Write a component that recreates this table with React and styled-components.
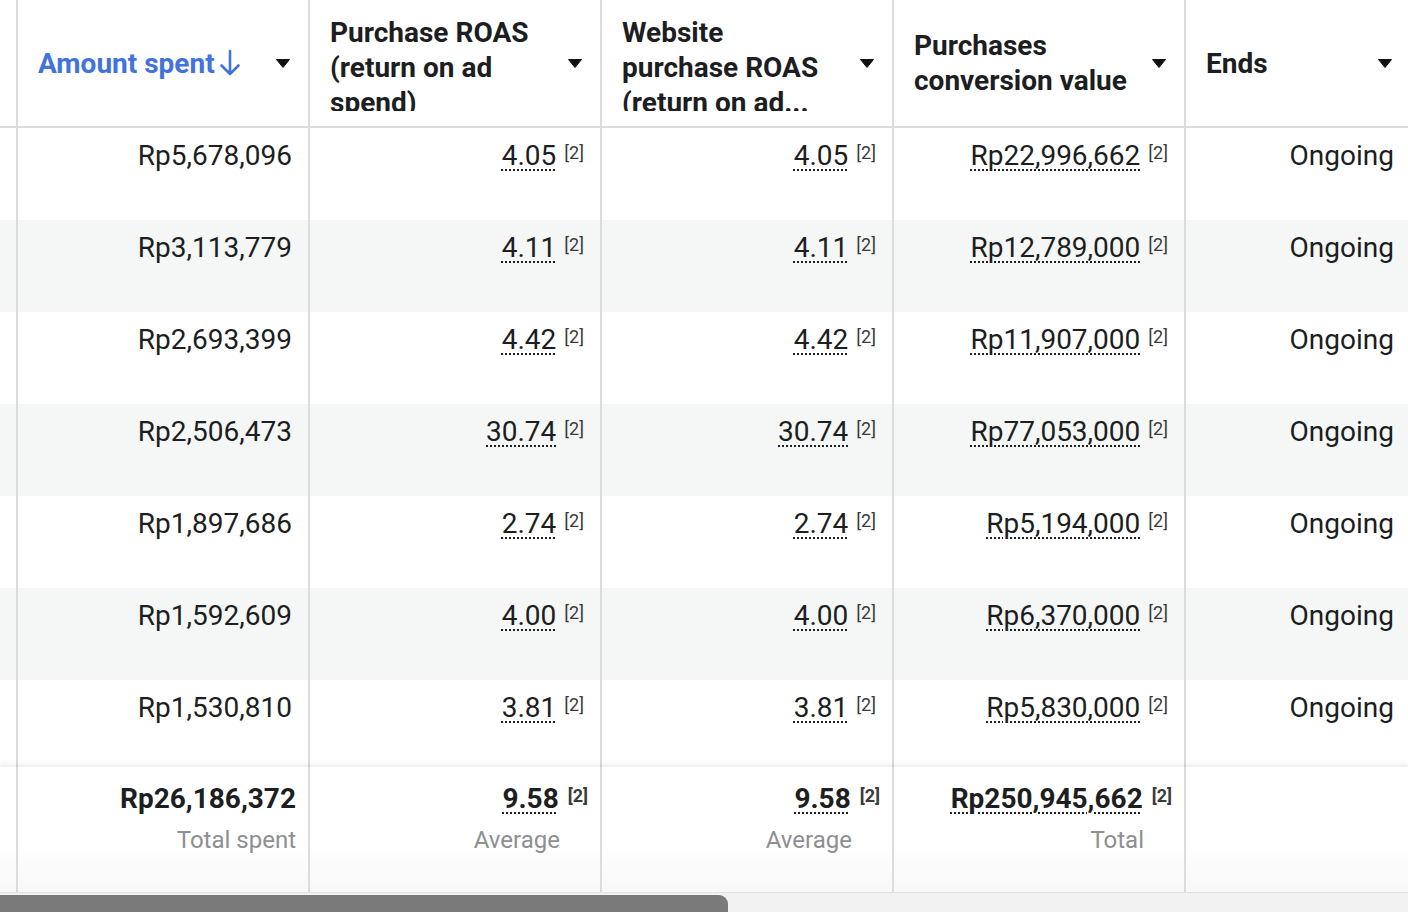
import React from 'react'
import styled, { createGlobalStyle } from 'styled-components'

const GlobalStyle = createGlobalStyle`
  html, body {
    margin: 0;
    padding: 0;
    background: #fff;
    overflow: hidden;
  }
  body {
    font-family: Roboto, "Liberation Sans", Arial, sans-serif;
    color: #1c1e21;
  }
`

const NoWrap = styled.span`
  white-space: nowrap;
`

const cols = '18px 292px 292px 292px 292px 224px'

const rows = [
  ['Rp5,678,096', '4.05', '4.05', 'Rp22,996,662'],
  ['Rp3,113,779', '4.11', '4.11', 'Rp12,789,000'],
  ['Rp2,693,399', '4.42', '4.42', 'Rp11,907,000'],
  ['Rp2,506,473', '30.74', '30.74', 'Rp77,053,000'],
  ['Rp1,897,686', '2.74', '2.74', 'Rp5,194,000'],
  ['Rp1,592,609', '4.00', '4.00', 'Rp6,370,000'],
  ['Rp1,530,810', '3.81', '3.81', 'Rp5,830,000'],
]

const headers = [
  { key: 'spent', label: 'Amount spent', active: true },
  { key: 'roas', label: 'Purchase ROAS (return on ad spend)' },
  { key: 'web', label: <>Website purchase ROAS (return on <NoWrap>ad...</NoWrap></> },
  { key: 'value', label: 'Purchases conversion value' },
  { key: 'ends', label: 'Ends' },
]

export default function App() {
  return (
    <Page>
      <GlobalStyle />
      <HeaderRow>
        <StubCell />
        {headers.map(h => (
          <HeaderCell key={h.key}>
            <HeaderText $active={h.active}>
              {h.label}
              {h.active && <SortArrow />}
            </HeaderText>
            <Caret />
          </HeaderCell>
        ))}
      </HeaderRow>

      <Body>
        {rows.map((r, i) => (
          <DataRow key={i} $striped={i % 2 === 1}>
            <StubCell />
            <DataCell>{r[0]}</DataCell>
            <DataCell><Metric value={r[1]} /></DataCell>
            <DataCell><Metric value={r[2]} /></DataCell>
            <DataCell><Metric value={r[3]} /></DataCell>
            <DataCell>Ongoing</DataCell>
          </DataRow>
        ))}
      </Body>

      <FooterRow>
        <StubCell />
        <FooterCell>
          <FooterValue>Rp26,186,372</FooterValue>
          <FooterLabel>Total spent</FooterLabel>
        </FooterCell>
        <FooterCell>
          <FooterValue><Dotted>9.58</Dotted><Sup $bold>[2]</Sup></FooterValue>
          <FooterLabel $shift>Average</FooterLabel>
        </FooterCell>
        <FooterCell>
          <FooterValue><Dotted>9.58</Dotted><Sup $bold>[2]</Sup></FooterValue>
          <FooterLabel $shift>Average</FooterLabel>
        </FooterCell>
        <FooterCell>
          <FooterValue><Dotted>Rp250,945,662</Dotted><Sup $bold>[2]</Sup></FooterValue>
          <FooterLabel $shift>Total</FooterLabel>
        </FooterCell>
        <FooterCell />
      </FooterRow>

      <ScrollTrack>
        <ScrollThumb />
      </ScrollTrack>
    </Page>
  )
}

const Metric = ({ value }) => (
  <>
    <Dotted>{value}</Dotted>
    <Sup>[2]</Sup>
  </>
)

const SortArrow = () => (
  <ArrowSvg viewBox="0 0 22 28" width="22" height="28">
    <path d="M11 2v23M2.5 16.5L11 25l8.5-8.5" fill="none" stroke="currentColor" strokeWidth="2.6" strokeLinecap="round" strokeLinejoin="round" />
  </ArrowSvg>
)

const Caret = () => (
  <CaretSvg viewBox="0 0 14 9" width="14" height="9">
    <path d="M0.5 0.5h13L7 8.5z" fill="#111" stroke="#111" strokeLinejoin="round" />
  </CaretSvg>
)

const Page = styled.div`
  width: 1409px;
  height: 912px;
  display: flex;
  flex-direction: column;
  overflow: hidden;
`

const HeaderRow = styled.div`
  display: grid;
  grid-template-columns: ${cols};
  height: 128px;
  border-bottom: 2px solid #dadce0;
  box-sizing: border-box;
  flex: none;
`

const StubCell = styled.div`
  border-right: 2px solid #dadce0;
`

const HeaderCell = styled.div`
  display: flex;
  align-items: center;
  padding: 0 18px 0 20px;
  border-right: 2px solid #dadce0;
  &:last-child { border-right: none; }
`

const HeaderText = styled.div`
  width: 216px;
  max-height: 96px;
  overflow: hidden;
  font-size: 28px;
  line-height: 35px;
  font-weight: 700;
  color: ${p => (p.$active ? '#4272de' : '#1c1e21')};
`

const ArrowSvg = styled.svg`
  display: inline-block;
  vertical-align: -4px;
  margin-left: 4px;
`

const CaretSvg = styled.svg`
  margin-left: auto;
  flex: none;
`

const Body = styled.div`
  height: 639px;
  overflow: hidden;
  flex: none;
`

const DataRow = styled.div`
  display: grid;
  grid-template-columns: ${cols};
  height: 92px;
  background: ${p => (p.$striped ? '#f5f6f6' : '#fff')};
`

const DataCell = styled.div`
  padding: 10px 16px 0;
  text-align: right;
  font-size: 28px;
  line-height: 36px;
  white-space: nowrap;
  border-right: 2px solid #dadce0;
  &:last-child { border-right: none; }
`

const Dotted = styled.span`
  text-decoration-line: underline;
  text-decoration-style: dotted;
  text-decoration-thickness: 2px;
  text-underline-offset: 4px;
`

const Sup = styled.span`
  display: inline-block;
  vertical-align: top;
  margin-left: ${p => (p.$bold ? '9px' : '8px')};
  font-size: 18px;
  line-height: 30px;
  font-weight: ${p => (p.$bold ? 700 : 400)};
  color: #3a3b3c;
`

const FooterRow = styled.div`
  display: grid;
  grid-template-columns: ${cols};
  height: 126px;
  flex: none;
  position: relative;
  background: linear-gradient(#fff 60%, #f8f8f8);
  box-shadow: 0 -3px 5px rgba(0, 0, 0, 0.07);
  border-bottom: 1px solid #e2e2e2;
  box-sizing: border-box;
`

const FooterCell = styled.div`
  padding: 14px 12px 0;
  text-align: right;
  white-space: nowrap;
  border-right: 2px solid #dadce0;
  &:last-child { border-right: none; }
`

const FooterValue = styled.div`
  font-size: 28px;
  line-height: 36px;
  font-weight: 700;
`

const FooterLabel = styled.div`
  margin-top: 5px;
  margin-right: ${p => (p.$shift ? '28px' : '0')};
  font-size: 24px;
  line-height: 36px;
  color: #8d8f92;
`

const ScrollTrack = styled.div`
  flex: 1;
  display: flex;
  align-items: flex-end;
  background: #f2f2f2;
`

const ScrollThumb = styled.div`
  width: 728px;
  height: 17px;
  background: #7a7a7a;
  border-radius: 0 9px 0 0;
`
